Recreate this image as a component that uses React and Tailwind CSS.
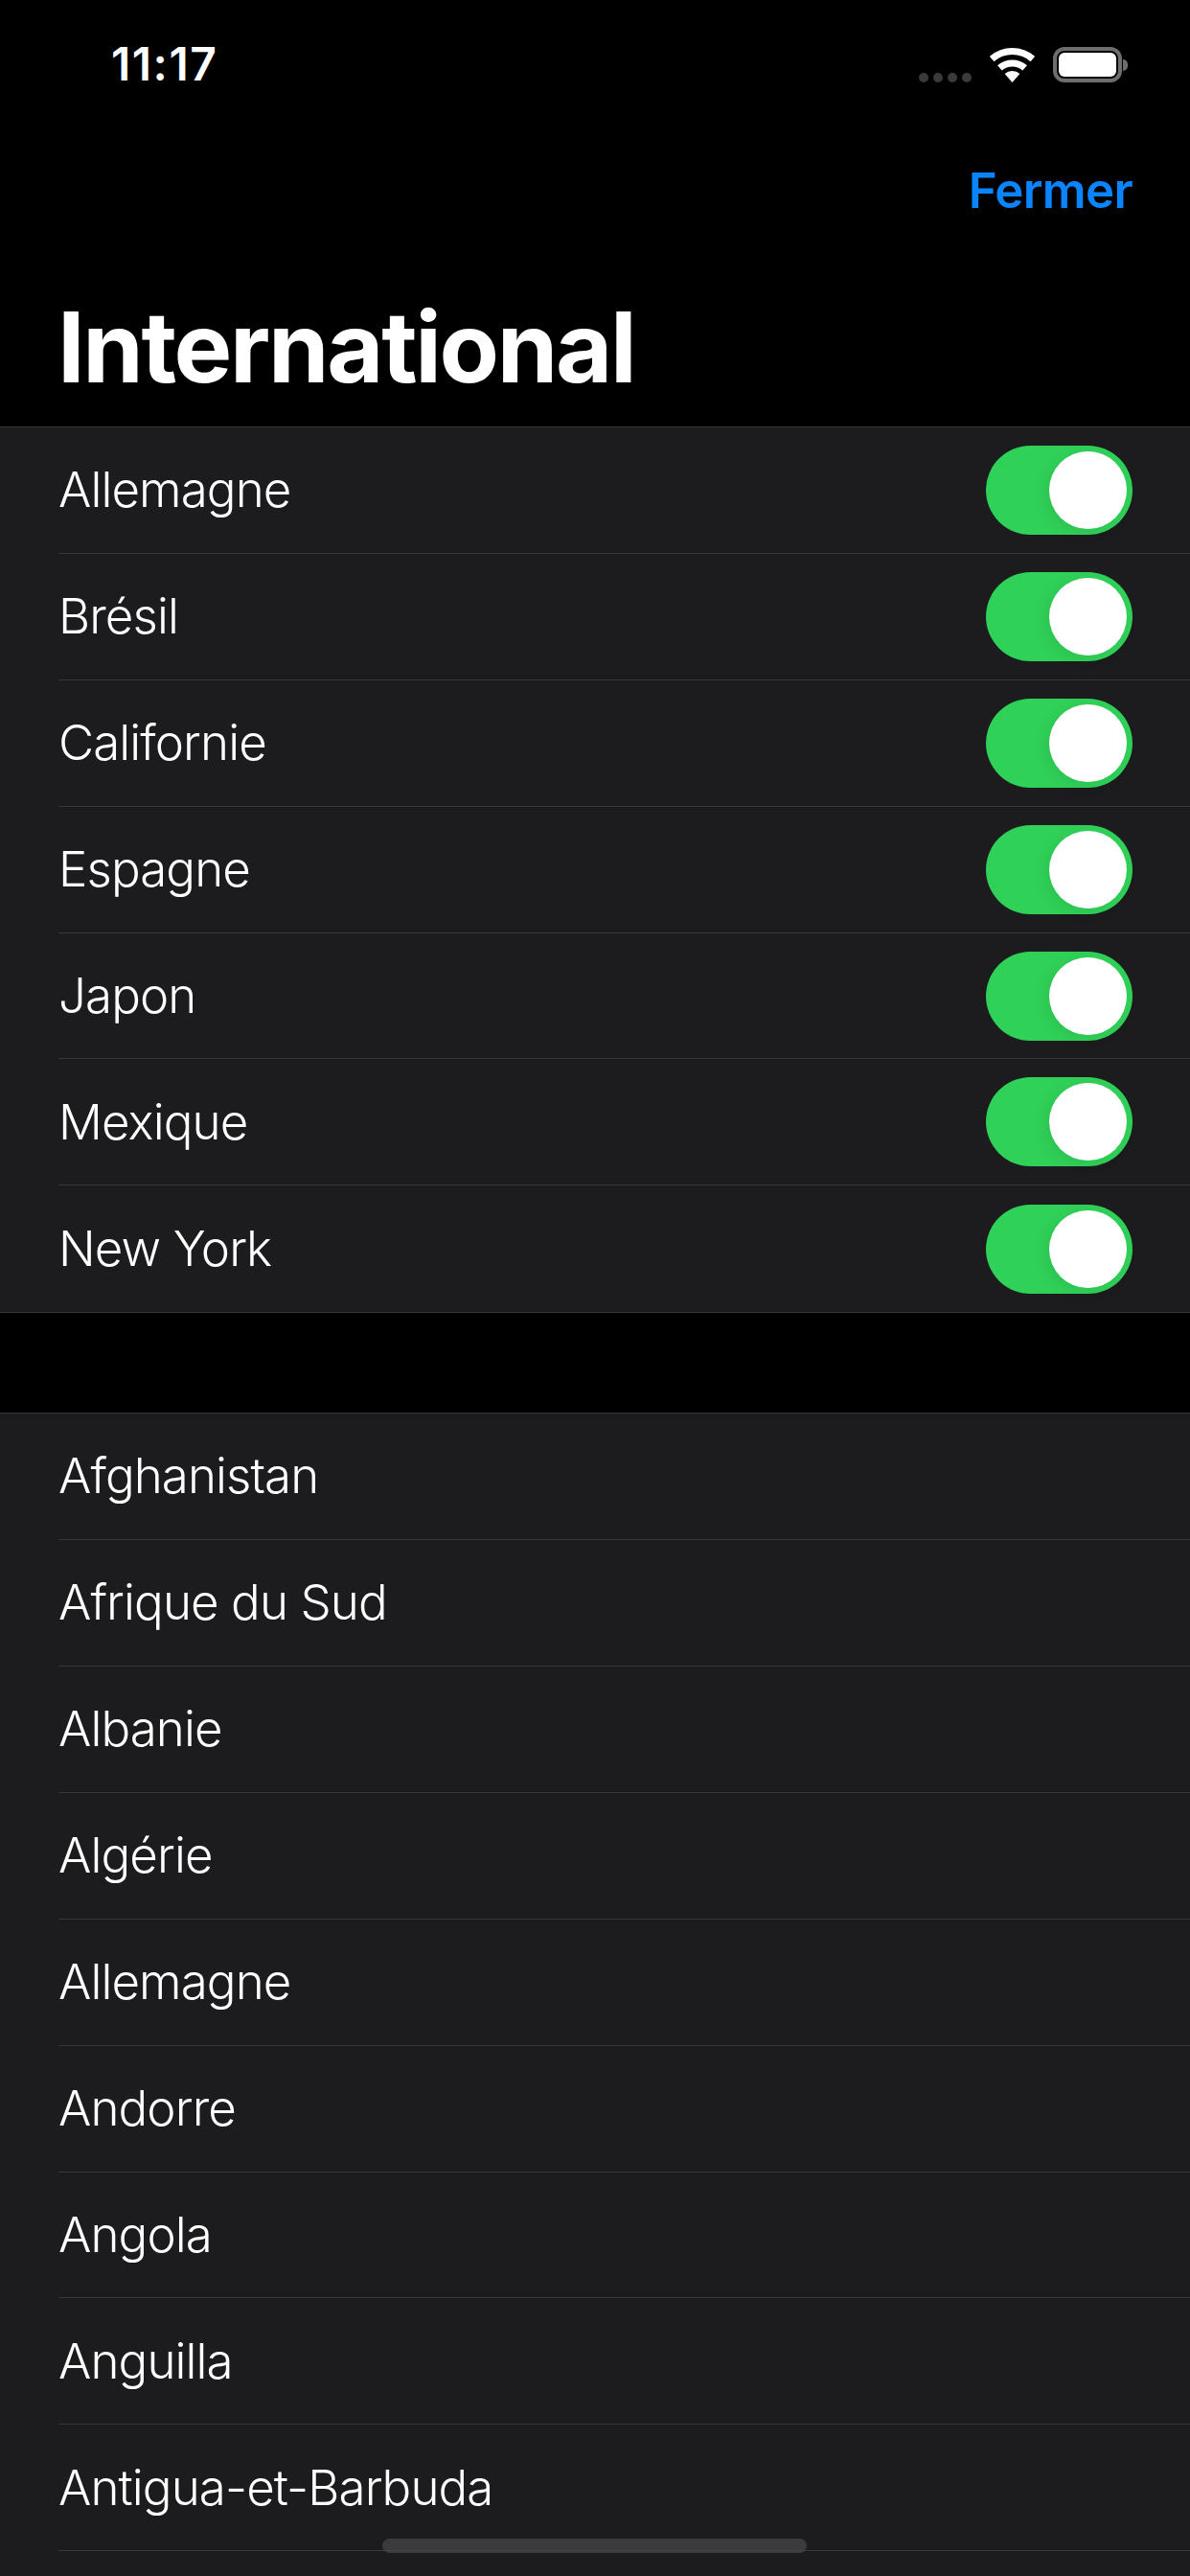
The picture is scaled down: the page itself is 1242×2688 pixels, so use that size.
const regions = ["Allemagne", "Brésil", "Californie", "Espagne", "Japon", "Mexique", "New York"];
const countries = ["Afghanistan", "Afrique du Sud", "Albanie", "Algérie", "Allemagne", "Andorre", "Angola", "Anguilla", "Antigua-et-Barbuda", ""];

function WifiIcon() {
  return (
    <svg width="47" height="36" viewBox="0 0 47 36" fill="none" className="block">
      <path d="M2.2 11.5A32.5 32.5 0 0 1 44.8 11.5" stroke="white" strokeWidth="7" />
      <path d="M10.4 20.9A20 20 0 0 1 36.6 20.9" stroke="white" strokeWidth="7" />
      <path d="M23.5 36L15.6 26.9A12 12 0 0 1 31.4 26.9Z" fill="white" />
    </svg>
  );
}

function Battery() {
  return (
    <div className="flex items-center">
      <div className="h-[37px] w-[72px] rounded-[12px] border-[4px] border-[#6e6e6e] p-[2px]">
        <div className="h-full w-full rounded-[6px] bg-white" />
      </div>
      <div className="ml-[1px] h-[12px] w-[5px] rounded-r-[6px] bg-[#6e6e6e]" />
    </div>
  );
}

function Toggle() {
  return (
    <div className="flex h-[93px] w-[153px] items-center justify-end rounded-full bg-[#30d158] pr-[6px]">
      <div className="h-[81px] w-[81px] rounded-full bg-white shadow-[-4px_4px_16px_rgba(0,0,0,0.08)]" />
    </div>
  );
}

function Row({ label, toggle, last }) {
  return (
    <div className="h-[131.9px] pl-[61px]">
      <div className={`flex h-full items-center justify-between pr-[60px] ${last ? "" : "border-b border-[#38383a]"}`}>
        <span className="text-[51px] font-light tracking-[-0.9px] text-white">{label}</span>
        {toggle && <Toggle />}
      </div>
    </div>
  );
}

export default function App() {
  return (
    <div className="relative h-[2688px] w-[1242px] overflow-hidden bg-black font-['Inter',sans-serif]">
      <div className="flex h-[106px] items-end justify-between pr-[65px] pl-[116px] pb-[13px]">
        <span className="relative top-[2px] text-[48px] leading-[56px] font-semibold tracking-[1.5px] text-white">11:17</span>
        <div className="flex items-end gap-[19px] pb-[7px]">
          <div className="flex gap-[5px]">
            <div className="h-[10px] w-[10px] rounded-full bg-[#3a3a3a]" />
            <div className="h-[10px] w-[10px] rounded-full bg-[#3a3a3a]" />
            <div className="h-[10px] w-[10px] rounded-full bg-[#3a3a3a]" />
            <div className="h-[10px] w-[10px] rounded-full bg-[#3a3a3a]" />
          </div>
          <WifiIcon />
          <Battery />
        </div>
      </div>
      <div className="mb-[8px] flex h-[186px] items-center justify-end pr-[60px]">
        <span className="text-[51px] font-semibold tracking-[-0.7px] text-[#0a84ff]">Fermer</span>
      </div>
      <div className="h-[145px] pl-[60px]">
        <h1 className="text-[102px] leading-[124px] font-bold tracking-[-2.3px] text-white">International</h1>
      </div>

      <section className="border-y border-[#38383a] bg-[#1c1c1e]">
        {regions.map((name, i) => (
          <Row key={name} label={name} toggle last={i === regions.length - 1} />
        ))}
      </section>

      <div className="h-[104px]" />

      <section className="border-t border-[#38383a] bg-[#1c1c1e]">
        {countries.map((name, i) => (
          <Row key={i} label={name} last={i === countries.length - 1} />
        ))}
      </section>

      <div className="absolute bottom-[24px] left-[399px] h-[15px] w-[443px] rounded-full bg-[#48484a]/70" />
    </div>
  );
}
